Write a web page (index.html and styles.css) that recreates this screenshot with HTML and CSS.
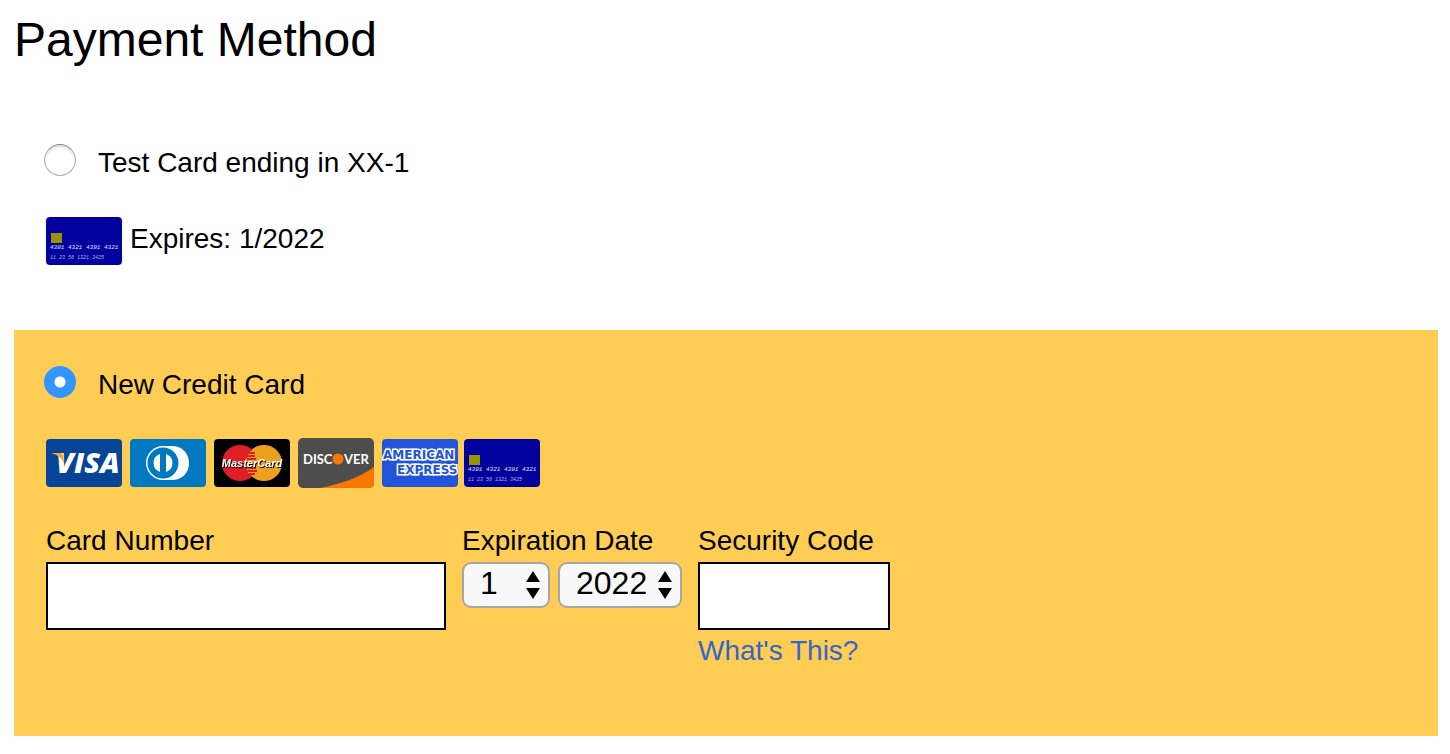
FILE: index.html
```
<!DOCTYPE html>
<html lang="en">
<head>
<meta charset="utf-8">
<title>Payment Method</title>
<link rel="stylesheet" href="styles.css">
</head>
<body>
<main class="payment">
  <h1 class="title">Payment Method</h1>
  <form>
    <section class="method">
      <div class="choice">
        <input class="radio" type="radio" name="method" id="saved">
        <label for="saved">Test Card ending in XX-1</label>
      </div>
      <div class="card-info">
        <svg class="logo" viewBox="0 0 76 50" role="img" aria-label="Credit card">
          <rect y="1" width="76" height="48" rx="4" fill="#00009c"/>
          <rect x="5" y="17" width="11" height="10" fill="#9b9400"/>
          <text x="4" y="33" class="digits">4391 4321 4391 4321</text>
          <text x="4" y="43" class="digits-small">11 23 56</text>
          <text x="31" y="43" class="digits-small">1321 3425</text>
        </svg>
        <span>Expires: 1/2022</span>
      </div>
    </section>
    <section class="method selected">
      <div class="choice">
        <input class="radio" type="radio" name="method" id="new" checked>
        <label for="new">New Credit Card</label>
      </div>
      <div class="logos">
        <svg class="logo" viewBox="0 0 76 50" role="img" aria-label="Visa">
          <rect y="1" width="76" height="48" rx="4" fill="#064497"/>
          <text x="10" y="35" class="visa-text">VISA</text>
          <path d="M5 15H14Q17 15 17 18L18 25Q14 17 5 15Z" fill="#f9a51a"/>
        </svg>
        <svg class="logo" viewBox="0 0 76 50" role="img" aria-label="Diners Club">
          <rect y="1" width="76" height="48" rx="4" fill="#0079c1"/>
          <path d="M33 8H42C53 8 59 16 59 25C59 35 52 42 42 42H33A17 17 0 0 1 33 8Z" fill="#fff"/>
          <circle cx="33" cy="25" r="15.500" fill="#0079c1"/>
          <path d="M30 16A9.500 9.500 0 0 0 30 34ZM36 16A9.500 9.500 0 0 1 36 34Z" fill="#fff"/>
        </svg>
        <svg class="logo" viewBox="0 0 76 50" role="img" aria-label="MasterCard">
          <rect y="1" width="76" height="48" rx="4" fill="#000"/>
          <circle cx="26" cy="25" r="18" fill="#de1f27"/>
          <circle cx="50" cy="25" r="18" fill="#eca01e"/>
          <path d="M38 12H35M41 15H34M41 18H33M42 21H33M33 30H42M34 33H43M35 36H41" stroke="#de1f27" stroke-width="2"/>
          <path d="M35 16.500H41M33 31.500H42M34 34.500H41" stroke="#eca01e" stroke-width="1"/>
          <text x="38" y="29" class="mc-text">MasterCard</text>
        </svg>
        <svg class="logo" viewBox="0 0 76 50" role="img" aria-label="Discover">
          <rect width="76" height="50" rx="5" fill="#4d4d4d"/>
          <path d="M22 50C42 46 61 40 76 29V45Q76 50 71 50Z" fill="#f97600"/>
          <text x="5" y="26" class="disc-text">DISC</text>
          <circle cx="40" cy="21" r="5.500" fill="#f97600"/>
          <text x="46" y="26" class="disc-text">VER</text>
        </svg>
        <svg class="logo" viewBox="0 0 76 50" role="img" aria-label="American Express">
          <rect y="1" width="76" height="48" rx="4" fill="#2154d8"/>
          <text x="1" y="21" class="amex-text">AMERICAN</text>
          <text x="15" y="36" class="amex-text">EXPRESS</text>
        </svg>
        <svg class="logo logo-last" viewBox="0 0 76 50" role="img" aria-label="Other card">
          <rect y="1" width="76" height="48" rx="4" fill="#00009c"/>
          <rect x="5" y="17" width="11" height="10" fill="#9b9400"/>
          <text x="4" y="33" class="digits">4391 4321 4391 4321</text>
          <text x="4" y="43" class="digits-small">11 23 56</text>
          <text x="31" y="43" class="digits-small">1321 3425</text>
        </svg>
      </div>
      <div class="fields">
        <div class="field number">
          <label for="number">Card Number</label>
          <input class="box" type="text" id="number">
        </div>
        <div class="field">
          <label for="month">Expiration Date</label>
          <div class="selects">
            <div class="picker month">
              <select id="month"><option>1</option></select>
              <svg class="arrows" viewBox="0 0 14 28" aria-hidden="true"><path d="M7 0L14 11H0ZM0 17H14L7 28Z"/></svg>
            </div>
            <div class="picker year">
              <select id="year" aria-label="Expiration year"><option>2022</option></select>
              <svg class="arrows" viewBox="0 0 14 28" aria-hidden="true"><path d="M7 0L14 11H0ZM0 17H14L7 28Z"/></svg>
            </div>
          </div>
        </div>
        <div class="field code">
          <label for="code">Security Code</label>
          <input class="box" type="text" id="code">
          <a class="help" href="#code">What's This?</a>
        </div>
      </div>
    </section>
  </form>
</main>
</body>
</html>
```
FILE: styles.css
```
* { box-sizing: border-box; }
body {
  margin: 0;
  background: #fff;
  color: #000;
  font: 28px/32px "Liberation Sans", Arial, sans-serif;
}
.payment { padding: 12px 12px 16px 14px; }
.title { margin: 0 0 40px; font-size: 48px; line-height: 56px; font-weight: 400; }
.method { padding: 36px 32px 64px; }
.selected { background: #ffcd53; padding-bottom: 69px; }
.choice { display: flex; margin-left: -2px; gap: 22px; }
.choice label { padding-top: 3px; }
.radio {
  appearance: none;
  flex: none;
  width: 32px;
  height: 32px;
  margin: 0;
  border: 1px solid #adadad;
  border-top-color: #8a8a8a;
  border-radius: 50%;
  background: #fff;
  box-shadow: inset 0 2px 3px #ddd;
}
.radio:checked {
  border: 0;
  background: radial-gradient(circle, #fff 5px, #3395ff 6px);
  box-shadow: none;
}
.card-info { display: flex; gap: 8px; margin-top: 37px; }
.card-info span { padding-top: 7px; }
.logos { display: flex; gap: 8px; margin-top: 37px; }
.logo { flex: none; width: 76px; height: 50px; }
.logo-last { margin-left: -2px; }
.digits { font: italic 6px "Liberation Mono", monospace; fill: #e4e4ff; }
.digits-small { font: italic 5px "Liberation Mono", monospace; fill: #b4b4ec; }
.visa-text { font: italic 800 29px "Open Sans", sans-serif; fill: #fff; }
.mc-text {
  font: italic bold 11px "Liberation Sans", sans-serif;
  fill: #fff;
  text-anchor: middle;
  filter: drop-shadow(1px 1px 0 #000);
}
.disc-text { font: bold 13px Lato, sans-serif; fill: #fff; }
.amex-text {
  font: bold 12px "DejaVu Sans", sans-serif;
  fill: #2154d8;
  stroke: #fff;
  stroke-width: 3px;
  paint-order: stroke;
}
.fields { display: flex; align-items: flex-start; gap: 16px; margin-top: 37px; }
.field { display: flex; flex-direction: column; }
.number { width: 400px; }
.code { width: 192px; }
.field label { margin-bottom: 5px; }
.box {
  width: 100%;
  height: 68px;
  padding: 0 12px;
  border: 2px solid #000;
  border-radius: 0;
  background: #fff;
  font: inherit;
}
.selects { display: flex; gap: 8px; }
.picker { position: relative; height: 46px; }
.month { width: 88px; }
.year { width: 124px; }
.picker select {
  appearance: none;
  width: 100%;
  height: 100%;
  margin: 0;
  padding: 0 0 4px 16px;
  border: 2px solid #a6a6a6;
  border-radius: 9px;
  background: #f8f8f8;
  color: #000;
  font: 32px "Liberation Sans", Arial, sans-serif;
}
.arrows { position: absolute; right: 10px; top: 9px; width: 14px; height: 28px; pointer-events: none; }
.help { margin-top: 5px; color: #3366cc; text-decoration: none; }
```
